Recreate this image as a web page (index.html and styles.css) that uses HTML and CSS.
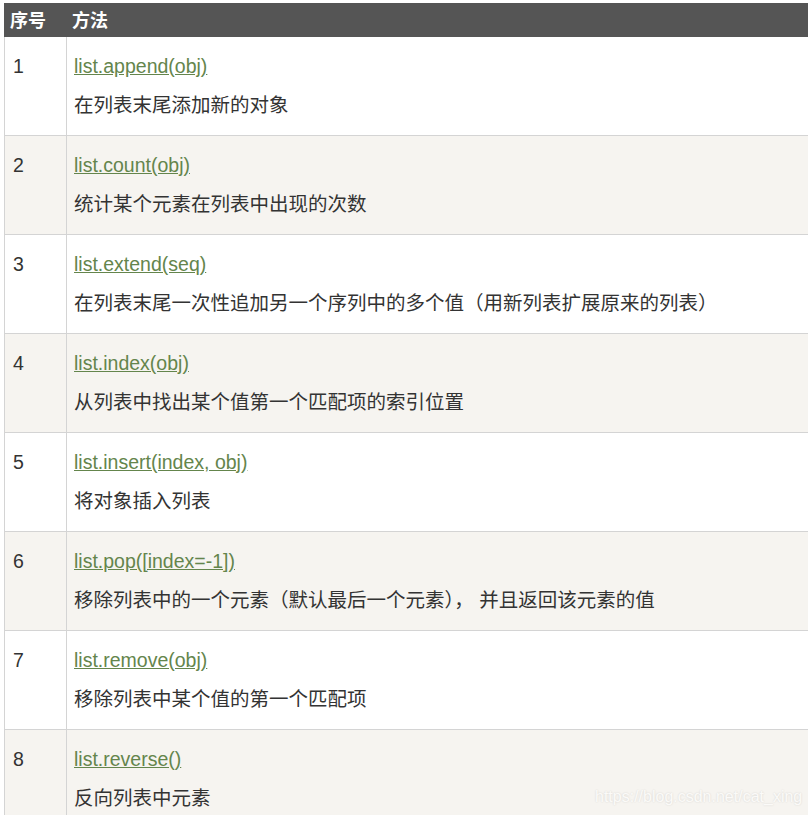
FILE: index.html
```html
<!DOCTYPE html>
<html lang="zh">
<head>
<meta charset="utf-8">
<title>Python 列表方法</title>
<link rel="stylesheet" href="styles.css">
</head>
<body>
<table class="reference">
  <tr class="head"><th class="col-num">序号</th><th>方法</th></tr>
  <tr><td class="col-num">1</td><td><a href="#">list.append(obj)</a><br>在列表末尾添加新的对象</td></tr>
  <tr><td class="col-num">2</td><td><a href="#">list.count(obj)</a><br>统计某个元素在列表中出现的次数</td></tr>
  <tr><td class="col-num">3</td><td><a href="#">list.extend(seq)</a><br>在列表末尾一次性追加另一个序列中的多个值（用新列表扩展原来的列表）</td></tr>
  <tr><td class="col-num">4</td><td><a href="#">list.index(obj)</a><br>从列表中找出某个值第一个匹配项的索引位置</td></tr>
  <tr><td class="col-num">5</td><td><a href="#">list.insert(index, obj)</a><br>将对象插入列表</td></tr>
  <tr><td class="col-num">6</td><td><a href="#">list.pop([index=-1])</a><br>移除列表中的一个元素（默认最后一个元素）， 并且返回该元素的值</td></tr>
  <tr><td class="col-num">7</td><td><a href="#">list.remove(obj)</a><br>移除列表中某个值的第一个匹配项</td></tr>
  <tr><td class="col-num">8</td><td><a href="#">list.reverse()</a><br>反向列表中元素</td></tr>
</table>
<div class="watermark">https://blog.csdn.net/cat_xing</div>
</body>
</html>
```

FILE: styles.css
```css
html, body {
  margin: 0;
  padding: 0;
  height: 815px;
  overflow: hidden;
  background: #fff;
}
body {
  padding: 3px 0 0 4px;
  box-sizing: border-box;
  font-family: "Liberation Sans", "Noto Sans CJK SC", sans-serif;
  color: #333;
  position: relative;
}
.reference {
  border-collapse: collapse;
  width: 830px;
  table-layout: fixed;
}
.reference th {
  background: #555;
  color: #fff;
  border: 1px solid #555;
  font-size: 18px;
  font-weight: bold;
  text-align: left;
  vertical-align: top;
  padding: 4px 5px 5px;
  line-height: 23px;
  font-family: "Noto Sans CJK SC", sans-serif;
}
.reference th.col-num {
  width: 51px;
}
.reference td {
  border: 1px solid #d4d4d4;
  padding: 10px 7px 10px 7px;
  font-size: 19.5px;
  line-height: 39px;
  vertical-align: top;
  white-space: pre-line;
}
.reference td.col-num {
  padding-left: 8px;
}
.reference tr:nth-child(even) td {
  background: #fff;
}
.reference tr:nth-child(odd) td {
  background: #f6f4f0;
}
.reference a {
  color: #64854c;
  text-decoration: underline;
}
.watermark {
  position: absolute;
  left: 595px;
  top: 786px;
  font-size: 16px;
  line-height: 22px;
  color: #fbfaf8;
  text-shadow: 0 0 2px rgba(0,0,0,0.14);
  font-family: "Liberation Sans", sans-serif;
}
```
